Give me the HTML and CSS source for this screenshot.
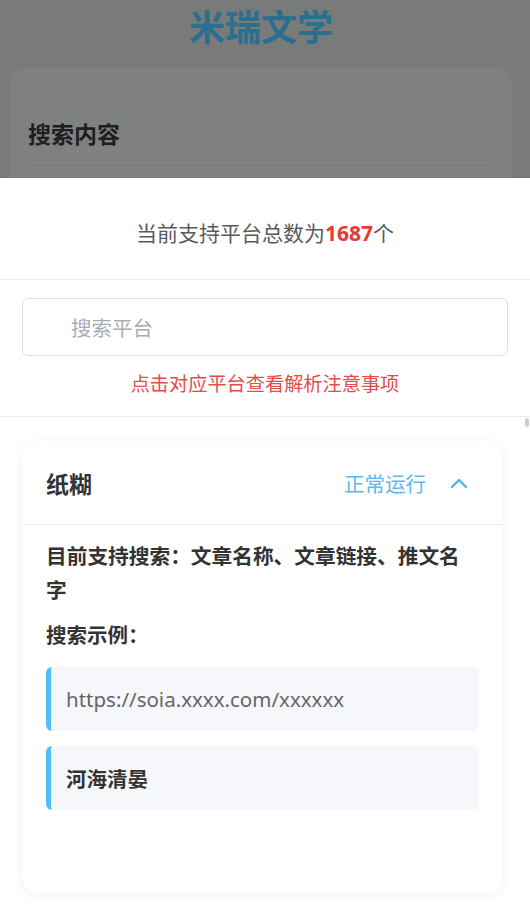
FILE: index.html
```html
<!DOCTYPE html>
<html lang="zh-CN">
<head>
<meta charset="utf-8">
<title>米瑞文学</title>
<link rel="stylesheet" href="styles.css">
</head>
<body>
<div class="page">
  <h1 class="brand">米瑞文学</h1>
  <div class="page-card">
    <h2 class="page-card-title">搜索内容</h2>
    <div class="page-field"></div>
  </div>
</div>

<div class="sheet">
  <div class="sheet-head">
    <p class="count">当前支持平台总数为<span class="count-num">1687</span>个</p>
  </div>
  <div class="search-area">
    <div class="search-input">搜索平台</div>
    <p class="notice">点击对应平台查看解析注意事项</p>
  </div>
  <div class="list">
    <div class="scroll-thumb"></div>
    <div class="platform-card">
      <div class="platform-head">
        <span class="platform-name">纸糊</span>
        <span class="platform-status">正常运行</span>
        <svg class="chev" width="20" height="20" viewBox="0 0 20 20"><path d="M3 14 L10 7 L17 14" fill="none" stroke="#4fb3ec" stroke-width="2.4" stroke-linecap="round" stroke-linejoin="round"/></svg>
      </div>
      <div class="platform-body">
        <p class="support">目前支持搜索：文章名称、文章链接、推文名字</p>
        <p class="example-label">搜索示例：</p>
        <div class="example example-url">https://soia.xxxx.com/xxxxxx</div>
        <div class="example example-name">河海清晏</div>
      </div>
    </div>
  </div>
</div>
</body>
</html>
```

FILE: styles.css
```css
* { box-sizing: border-box; }
html, body { margin: 0; padding: 0; }
body {
  width: 530px;
  height: 908px;
  overflow: hidden;
  background: #797a7a;
  font-family: "Noto Sans", "Noto Sans CJK SC", sans-serif;
  position: relative;
}
p, h1, h2 { margin: 0; }

.page { padding-right: 8px; }
.brand {
  height: 56px;
  line-height: 56px;
  text-align: center;
  font-size: 36px;
  font-weight: 700;
  color: #2b6f8f;
}
.page-card {
  margin: 12px 10px 0 10px;
  height: 300px;
  background: #7f8080;
  border-radius: 16px;
  padding: 49px 18px 0 18px;
}
.page-card-title {
  font-size: 23px;
  line-height: 34px;
  font-weight: 700;
  color: #1e1e1e;
}
.page-field {
  margin-top: 14px;
  height: 60px;
  border-top: 1px solid #777878;
}

.sheet {
  position: absolute;
  left: 0;
  right: 0;
  top: 178px;
  bottom: 0;
  background: #fff;
  display: flex;
  flex-direction: column;
}
.sheet-head {
  height: 102px;
  padding-top: 40px;
  border-bottom: 1px solid #ebeef5;
}
.count {
  text-align: center;
  font-size: 21px;
  line-height: 30px;
  color: #5a5a5a;
}
.count-num {
  color: #e53935;
  font-weight: 700;
}
.search-area {
  padding: 18px 22px;
  border-bottom: 1px solid #ebeef5;
}
.search-input {
  height: 58px;
  border: 1px solid #dcdfe6;
  border-radius: 6px;
  padding-left: 48px;
  display: flex;
  align-items: center;
  font-size: 20.5px;
  color: #a8abb2;
}
.notice {
  margin-top: 14px;
  text-align: center;
  font-size: 19.2px;
  line-height: 28px;
  color: #e24c49;
}

.list {
  flex: 1;
  position: relative;
  padding: 24px 27px 0 22px;
  overflow: hidden;
}
.scroll-thumb {
  position: absolute;
  right: 1px;
  top: 1px;
  width: 4px;
  height: 9px;
  border-radius: 2px;
  background: #cfcfcf;
}
.platform-card {
  background: #fff;
  border-radius: 16px;
  box-shadow: 0 2px 12px rgba(0, 0, 0, 0.06);
}
.platform-head {
  height: 84px;
  padding: 0 34px 0 24px;
  display: flex;
  align-items: center;
  border-bottom: 1px solid #ebeef5;
}
.platform-name {
  font-size: 23px;
  font-weight: 700;
  color: #333;
}
.platform-status {
  margin-left: auto;
  font-size: 20.5px;
  color: #5ab9ee;
}
.chev {
  margin-left: 23px;
  display: block;
}
.platform-body {
  padding: 14px 24px 83px 24px;
}
.support {
  font-size: 20.7px;
  line-height: 34px;
  font-weight: 700;
  color: #333;
}
.example-label {
  margin-top: 11px;
  font-size: 20.5px;
  line-height: 34px;
  font-weight: 700;
  color: #333;
}
.example {
  margin-top: 15px;
  height: 64px;
  background: #f5f7fa;
  border-left: 5px solid #4fc0f6;
  border-radius: 6px;
  padding-left: 15px;
  display: flex;
  align-items: center;
  font-size: 20.5px;
}
.example-url {
  color: #666;
  font-weight: 400;
}
.example-name {
  color: #333;
  font-weight: 700;
}
```
